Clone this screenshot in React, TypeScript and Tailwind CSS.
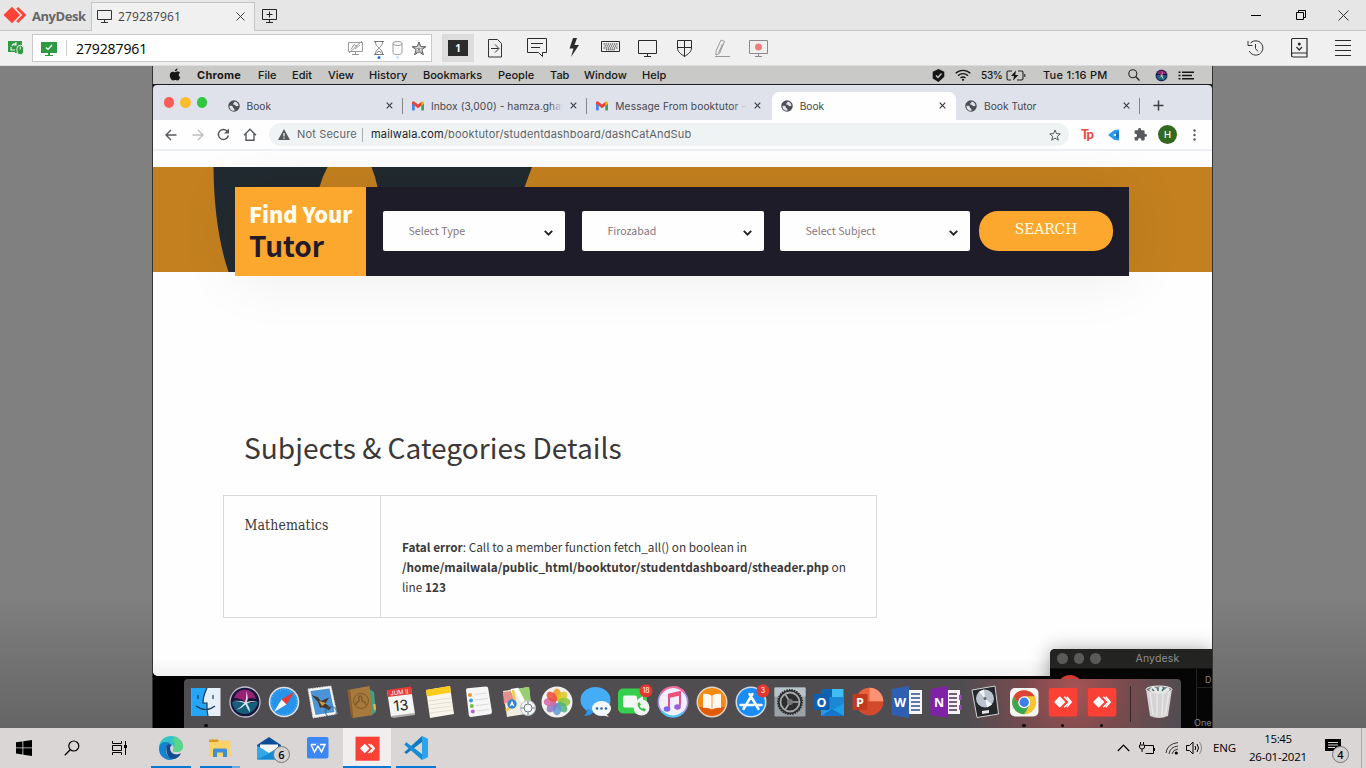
import type { ReactNode } from "react";

const MAC = "font-['Inter',sans-serif]";
const SOURCE = "font-['Noto_Sans_CJK_JP',sans-serif]";
const SEGOE = "font-['Open_Sans',sans-serif]";

type IconProps = { w: number; h: number; box?: string; className?: string; children: ReactNode };

function Icon({ w, h, box, className = "", children }: IconProps) {
  return (
    <svg width={w} height={h} viewBox={box ?? `0 0 ${w} ${h}`} fill="none" className={`block shrink-0 ${className}`}>
      {children}
    </svg>
  );
}

function Cell({ className, children }: { className: string; children?: ReactNode }) {
  return <div className={`flex shrink-0 items-center ${className}`}>{children}</div>;
}

/* ---------- AnyDesk window chrome ---------- */

function TitleBar() {
  return (
    <header className="flex h-[31px] items-stretch border-b border-[#c4c4c4] bg-[#e6e6e6]">
      <Cell className="w-[91px] pl-[3px]">
        <Icon w={26} h={18} className="-mt-px">
          <path d="M0.5 9 9 .8 17 9l-8 8.2z" fill="#ff4336" />
          <path d="M13.2 2.8 15.2 1 23.4 9l-8.2 8-2-1.9L19.3 9z" fill="#ff4336" />
        </Icon>
        <span className={`${SEGOE} mt-[2px] ml-[3px] text-[13px] leading-none font-bold tracking-[-0.45px] text-[#666]`}>AnyDesk</span>
      </Cell>
      <Cell className="mt-[2px] -mb-px w-[164px] border-x border-t border-[#c4c4c4] bg-[#f0f0f0] pl-[5px]">
        <Icon w={15} h={14} className="-mt-[2px]">
          <path d="M.5 1.5h14v9H.5zM7.5 10.5v2.5M4 13.500h7" stroke="#333" />
        </Icon>
        <span className={`${SEGOE} -mt-px ml-[6px] w-[118px] text-[12px] leading-none tracking-[0.150px] text-[#444]`}>279287961</span>
        <Icon w={9} h={9} className="-mt-px">
          <path d="m.5.5 8 8m0-8-8 8" stroke="#444" />
        </Icon>
      </Cell>
      <Cell className="w-[990px] pt-px pl-[7px]">
        <Icon w={15} h={14}>
          <path d="M.5.5h14v10H.5zM7.5 10.5v2.5M4 13.500h7M7.5 2.500v6M4.500 5.500h6" stroke="#222" />
        </Icon>
      </Cell>
      <Cell className="w-[45px] pt-[1px] pl-[6px]">
        <Icon w={10} h={1}>
          <path d="M0 .5h10" stroke="#000" />
        </Icon>
      </Cell>
      <Cell className="w-[43px] pl-[6px]">
        <Icon w={10} h={10}>
          <path d="M.5 2.500h7v7h-7zM2.500 2V.5h7v7H8" stroke="#000" />
        </Icon>
      </Cell>
      <Cell className="pl-[5px]">
        <Icon w={11} h={11}>
          <path d="m.5.5 10 10m0-10-10 10" stroke="#333" />
        </Icon>
      </Cell>
    </header>
  );
}

function ToolBar() {
  return (
    <div className="flex h-[35px] items-center border-b border-[#dcdcdc] bg-[#f0f0f0]">
      <Cell className="w-[32px] pl-[8px]">
        <Icon w={17} h={16}>
          <path d="M0 1h14v5h-2v7H7v-1H0z" fill="#2f9a41" />
          <path d="M4 6a3 3 0 0 1 4-2M8 2v3H5.500M4 10h3M3 7v3h3" stroke="#f0f0f0" strokeWidth="1.1" />
          <path d="M9 8.500v3a3.300 3.300 0 0 0 6.600 0v-3a3.300 3.300 0 0 0-6.600 0z" fill="#2f9a41" stroke="#f0f0f0" />
          <path d="M12.300 6.500v3" stroke="#f0f0f0" />
        </Icon>
      </Cell>
      <Cell className="h-[28px] w-[400px] border border-[#c9c9c9] bg-white pl-[8px]">
        <Icon w={16} h={15}>
          <path d="M0 1h16v11H0zM4 14h8v1H4zM7 12h2v2H7z" fill="#2f9a41" />
          <path d="m5 6.500 2 2 4-4.500" stroke="#fff" strokeWidth="1.200" />
        </Icon>
        <div className="ml-[9px] h-[16px] w-px bg-[#ccc]" />
        <span className={`${SEGOE} mt-px ml-[9px] w-[272px] text-[14px] leading-none tracking-[-0.100px] text-black`}>279287961</span>
        <Cell className="w-[26px]">
          <Icon w={16} h={15}>
            <path d="M.5 1.500h14v9H.5zM7.500 10.500V13M4 13.500h7M3 8.500l3-5 3 1.500M1 12 14 0M7 8l5-4" stroke="#999" />
          </Icon>
        </Cell>
        <Cell className="w-[18px]">
          <Icon w={11} h={18} className="mt-[3px]">
            <path d="M0 .5h10M0 13.500h10M1.500 1c0 4 3 4.500 3 6s-3 2-3 6M8.500 1c0 4-3 4.500-3 6s3 2 3 6M2.500 12l2.500-2 2.500 2" stroke="#777" />
            <circle cx="5" cy="16.500" r="1.500" fill="#2478dc" />
          </Icon>
        </Cell>
        <Cell className="w-[19px]">
          <Icon w={11} h={18} className="mt-[3px]">
            <ellipse cx="5.500" cy="2.500" rx="4.500" ry="2" stroke="#999" />
            <path d="M1 2.500v9c0 2.800 9 2.800 9 0v-9" stroke="#999" />
            <circle cx="5.500" cy="16.500" r="1.500" fill="#cfdffa" />
          </Icon>
        </Cell>
        <Icon w={16} h={15}>
          <path d="m8 1 1.800 4.700h5l-4 3 1.600 5L8 10.800l-4.400 2.900 1.600-5-4-3h5z" stroke="#444" strokeWidth=".9" />
          <path d="M8 3v8M3 6.500 8 8l5-1.500M5 12l3-4 3 4" stroke="#666" strokeWidth=".7" />
        </Icon>
      </Cell>
      <Cell className="w-[56px] pl-[10px]">
        <div className="flex h-[28px] w-[32px] items-center justify-center bg-[#dcdcdc]">
          <div className="flex h-[16px] w-[20px] items-center justify-center bg-[#2b2b2b]">
            <span className={`${SEGOE} text-[10px] leading-none font-bold text-white`}>1</span>
          </div>
        </div>
      </Cell>
      <Cell className="w-[39px]">
        <Icon w={15} h={19}>
          <path d="M.5.5h9l4 4v13.500H.5zM3 9.500h7.500M7 5.500l4 4-4 4" stroke="#333" />
        </Icon>
      </Cell>
      <Cell className="w-[42px]">
        <Icon w={20} h={20}>
          <path d="M.5.500h19v14h-4v4l-4-4H.5zM4 5.500h12M4 9.500h9" stroke="#2b2b2b" />
        </Icon>
      </Cell>
      <Cell className="w-[32px]">
        <Icon w={12} h={20}>
          <path d="M4 0h4L5.500 7H10L2 19l2.500-8.500H.500z" fill="#2b2b2b" />
        </Icon>
      </Cell>
      <Cell className="w-[37px]">
        <Icon w={19} h={13} className="-mt-[3px]">
          <path d="M.5 1.500h18v10H.5z" stroke="#2b2b2b" />
          <path d="M2.500 4h14M3.500 6h13M2.500 8h14M5 9.800h9" stroke="#2b2b2b" strokeDasharray="1.300 .8" />
        </Icon>
      </Cell>
      <Cell className="w-[39px]">
        <Icon w={19} h={17}>
          <path d="M.5.500h18v13H.5zM9.500 13.500v3M6 16.500h7" stroke="#2b2b2b" />
        </Icon>
      </Cell>
      <Cell className="w-[38px]">
        <Icon w={16} h={17}>
          <path d="M.5.500h14V8c0 4-3.500 6-7 8.500C4 14 .5 12 .5 8zM7.500.500v16M.5 7.500h14" stroke="#2b2b2b" />
        </Icon>
      </Cell>
      <Cell className="w-[34px]">
        <Icon w={16} h={18}>
          <path d="M6 1 9.500 2.500 4.500 14.500 1 16v-4zM7.500 5l-4 9M0 17.500h15" stroke="#999" />
        </Icon>
      </Cell>
      <Cell className="w-[498px]">
        <Icon w={19} h={17}>
          <path d="M.5.500h18v13H.5zM9.500 13.500v3M6 16.500h7" stroke="#8a8a8a" />
          <circle cx="9.500" cy="7" r="3.500" fill="#ee7f7b" />
        </Icon>
      </Cell>
      <Cell className="w-[44px]">
        <Icon w={18} h={18}>
          <path d="M3.500 4a7.200 7.200 0 1 1-1.300 8M1 2v4.500h4.500M8.500 5v4.500l2.500 3" stroke="#333" />
        </Icon>
      </Cell>
      <Cell className="w-[44px]">
        <Icon w={17} h={20}>
          <path d="M2.500.500h13.500v18.500H2.500q-2 0-2-1.500V2q0-1.500 2-1.500M.5 16.500q0-1.500 2-1.500H16M5.500 9l2.750 3L11 9" stroke="#2b2b2b" strokeWidth="1.200" />
          <circle cx="8.250" cy="6" r="1.500" fill="#2b2b2b" />
        </Icon>
      </Cell>
      <Icon w={16} h={16}>
        <path d="M0 .5h16M0 5.500h16M0 10.500h16M0 15.500h16" stroke="#2b2b2b" />
      </Icon>
    </div>
  );
}

/* ---------- macOS menu bar ---------- */

function Siri({ size }: { size: number }) {
  return (
    <Icon w={size} h={size} box="0 0 32 32">
      <circle cx="16" cy="16" r="15" fill="#16163a" stroke="#c2bfce" strokeWidth="1.300" />
      <path d="M5 12C8 4 14 3 19 4c5 2 7 5 8 9-5-2-9-1-11 3-3-3-7-4-11-4z" fill="#b52784" opacity=".8" />
      <path d="M3 16c6-1 10 0 13 1 4 1 8-1 13-1-1 6-6 12-13 12S4 23 3 16z" fill="#1790a8" opacity=".6" />
      <path d="M3.500 15q7-1 12.500 1 2-5 1-11 3 6 .8 11 5-1.500 10.500-.5-6 0-10.300 2 3 4 3 9-3-4-4.500-8-4 4-9 5.500 5-3.500 8-7-5-2-12-2z" fill="#ecfaff" opacity=".9" />
    </Icon>
  );
}

function MacMenu() {
  return (
    <div className={`${MAC} flex h-[19px] items-center border-b border-[#1d1d22] bg-[#c9c9c7] text-[11px] leading-none font-medium text-[#161616]`}>
      <Cell className="w-[44px] pl-[16px]">
        <Icon w={12} h={13} box="0 0 24 26" className="-mt-px">
          <path d="M17 1c.3 3-2.400 5.800-5.200 5.700C11.500 4 14 1.300 17 1zM22.500 18.500c-1.500 4-3.700 6.500-5.700 6.500-1.500 0-2.300-1-4.300-1s-2.900 1-4.400 1C5 25 1.500 19 1.500 14.500c0-4.700 3-7.200 6-7.200 2 0 3.500 1.200 4.700 1.200S15 7 17.700 7.200c1.500 0 3.300.8 4.400 2.400-3.800 2.200-3.100 7.500.4 8.900z" fill="#161616" />
        </Icon>
      </Cell>
      <Cell className="w-[61px] font-bold tracking-[0.250px]">Chrome</Cell>
      <Cell className="w-[34px]">File</Cell>
      <Cell className="w-[36px]">Edit</Cell>
      <Cell className="w-[41px]">View</Cell>
      <Cell className="w-[54px] tracking-[0.050px]">History</Cell>
      <Cell className="w-[75px]">Bookmarks</Cell>
      <Cell className="w-[52px]">People</Cell>
      <Cell className="w-[34px]">Tab</Cell>
      <Cell className="w-[58px]">Window</Cell>
      <Cell className="w-[290px]">Help</Cell>
      <Cell className="w-[23px]">
        <Icon w={13} h={13}>
          <path d="m6.500 0 5.800 2.800v5L6.500 13 .7 9.500V2.800z" fill="#161616" />
          <path d="m4 6.500 2 2 3.500-4" stroke="#ccc" strokeWidth="1.300" />
        </Icon>
      </Cell>
      <Cell className="w-[26px]">
        <Icon w={16} h={12}>
          <path d="M.7 4.300a10.500 10.500 0 0 1 14.600 0M3 6.800a7 7 0 0 1 10 0M5.500 9a4 4 0 0 1 5 0" stroke="#161616" strokeWidth="1.300" />
          <circle cx="8" cy="10.800" r="1.100" fill="#161616" />
        </Icon>
      </Cell>
      <Cell className="w-[25px] text-[10px] tracking-[-0.300px]">53%</Cell>
      <Cell className="w-[37px]">
        <Icon w={20} h={11}>
          <path d="M6 1H2.500Q1 1 1 2.500v6Q1 10 2.500 10H5M12 1h3.500Q17 1 17 2.500v6q0 1.500-1.500 1.500H11M18.800 4v3" stroke="#222" strokeWidth="1.100" />
          <path d="M10 .5 5 6h3l-1 4.500L12.500 5H9.300z" fill="#161616" />
        </Icon>
      </Cell>
      <Cell className="w-[85px] tracking-[0.250px]">Tue 1:16 PM</Cell>
      <Cell className="w-[27px]">
        <Icon w={12} h={12}>
          <circle cx="4.800" cy="4.800" r="4" stroke="#222" strokeWidth="1.100" />
          <path d="m7.800 7.800 3.700 3.700" stroke="#222" strokeWidth="1.300" />
        </Icon>
      </Cell>
      <Cell className="w-[23px]">
        <Siri size={13} />
      </Cell>
      <Icon w={16} h={9}>
        <path d="M4 1.200h12M4 4.500h10M4 7.800h12M.5 1.200h2M.5 4.500h2M.5 7.800h2" stroke="#161616" strokeWidth="1.500" />
      </Icon>
    </div>
  );
}

/* ---------- Chrome window ---------- */

function Globe() {
  return (
    <Icon w={12} h={12} box="0 0 24 24">
      <circle cx="12" cy="12" r="11.500" fill="#4c4d55" />
      <path d="M3 12c4-1 7 0 7 3 0 2 3 1 3 4v2.500C7 22 2.500 18 3 12zM13 3c0 3-3 3-3 5s4 1 5 3 4 1 6 1c0-4-3-8.500-8-9z" fill="#dfe1eb" />
    </Icon>
  );
}

function Gmail() {
  return (
    <Icon w={12} h={10} box="0 0 24 19">
      <path d="M0 4v13q0 1.500 1.500 1.500H5.500V8z" fill="#4285f4" />
      <path d="M24 4v13q0 1.500-1.500 1.500H18.500V8z" fill="#34a853" />
      <path d="M18.500 2v7L24 5V3c0-3-3-4-5.500-1z" fill="#fbbc04" />
      <path d="M0 3c0-3 3-4 5-2l7 5.500L19 1v7.500L12 14 5.500 9 0 5z" fill="#ea4335" />
    </Icon>
  );
}

function Close() {
  return (
    <Icon w={7} h={7}>
      <path d="m.7.7 5.600 5.600m0-5.600L.7 6.300" stroke="#3c4045" strokeWidth="1.200" />
    </Icon>
  );
}

function Tab({ icon, label, active, sep, spacing = "" }: { icon: ReactNode; label: string; active?: boolean; sep?: boolean; spacing?: string }) {
  return (
    <div className={`flex h-[28px] w-[184.400px] shrink-0 items-center pb-px pl-[9px] ${active ? "rounded-t-[7px] bg-[#fefefe]" : ""}`}>
      {icon}
      <span className={`relative ml-[7px] w-[132px] overflow-hidden text-[10.200px] leading-[14px] whitespace-nowrap text-[#45474d] ${spacing}`}>
        {label}
        {!active && <i className="absolute inset-y-0 right-0 w-[14px] bg-linear-to-r from-transparent to-[#dfe1eb]" />}
      </span>
      <span className="ml-[7px]">
        <Close />
      </span>
      {sep && <i className="ml-[9px] h-[16px] w-px bg-[#85888f]" />}
    </div>
  );
}

function TabStrip() {
  return (
    <div className={`${MAC} flex h-[35px] items-end bg-[#dfe1eb]`}>
      <div className="flex h-full w-[65.500px] shrink-0 gap-[6px] pt-[12px] pl-[10.500px]">
        <i className="size-[10.500px] rounded-full bg-[#fc5b57]" />
        <i className="size-[10.500px] rounded-full bg-[#fdbc2e]" />
        <i className="size-[10.500px] rounded-full bg-[#2fc840]" />
      </div>
      <Tab icon={<Globe />} label="Book" spacing="tracking-[0.050px]" sep />
      <Tab icon={<Gmail />} label="Inbox (3,000) - hamza.ghayas" spacing="tracking-[0.080px]" sep />
      <Tab icon={<Gmail />} label="Message From booktutor - ha" spacing="tracking-[0.120px]" />
      <Tab icon={<Globe />} label="Book" active />
      <Tab icon={<Globe />} label="Book Tutor" sep />
      <div className="flex h-[28px] items-center pb-px pl-[13px]">
        <Icon w={11} h={11}>
          <path d="M5.500.500v10M.5 5.500h10" stroke="#3c4045" strokeWidth="1.500" />
        </Icon>
      </div>
    </div>
  );
}

function AddressBar() {
  return (
    <div className={`${MAC} flex h-[31px] items-center border-b-2 border-[#eceff3] bg-[#fefefe] text-[11px] leading-none text-[#5f6368]`}>
      <Cell className="w-[26px] pl-[12px]">
        <Icon w={12} h={12}>
          <path d="M11.500 6H1.200M6 1 1 6l5 5" stroke="#55585d" strokeWidth="1.400" />
        </Icon>
      </Cell>
      <Cell className="w-[38px] pl-[13px]">
        <Icon w={12} h={12}>
          <path d="M.5 6h10.300M6 1l5 5-5 5" stroke="#bcbdc0" strokeWidth="1.400" />
        </Icon>
      </Cell>
      <Cell className="w-[26px]">
        <Icon w={13} h={13}>
          <path d="M11.300 7.500A5 5 0 1 1 10 3" stroke="#55585d" strokeWidth="1.500" />
          <path d="M12 .5v5H7z" fill="#55585d" />
        </Icon>
      </Cell>
      <Cell className="w-[26px]">
        <Icon w={14} h={13}>
          <path d="M3 6v6.200h8V6M1 7.200l6-6 6 6" stroke="#55585d" strokeWidth="1.400" />
        </Icon>
      </Cell>
      <div className="flex h-[23px] w-[800px] shrink-0 items-center rounded-full bg-[#eff3f4] pl-[9px]">
        <Icon w={12} h={11}>
          <path d="M6 0 12 11H0z" fill="#55585d" />
          <path d="M6 4v3.500M6 8.500v1.300" stroke="#fff" strokeWidth="1.200" />
        </Icon>
        <span className="ml-[7px] w-[65px] tracking-[0.170px] whitespace-nowrap">Not Secure</span>
        <i className="h-[14px] w-px bg-[#a9acb0]" />
        <span className="ml-[8px] w-[678px] tracking-[0.170px]">
          <span className="text-[#202124]">mailwala.com</span>/booktutor/studentdashboard/dashCatAndSub
        </span>
        <Icon w={12} h={12} box="0 0 24 24">
          <path d="m12 2 3 7.200 7.500.6-5.800 5 1.900 7.600L12 18.200 5.400 22.400l1.900-7.600-5.800-5 7.500-.6z" stroke="#55585d" strokeWidth="2" />
        </Icon>
      </div>
      <Cell className="w-[39px] pl-[12px]">
        <span className="font-['Lato',sans-serif] text-[13px] leading-none font-black tracking-[-1px] text-[#f04b43]">Tp</span>
      </Cell>
      <Cell className="w-[26px]">
        <Icon w={12} h={12}>
          <path d="M0 6 6.500 1 11 .5V4L5.500 6 11 8v3.500L6.500 11z" fill="#2a9be8" />
          <path d="M7 4l4-1.500v7L7 8z" fill="#1676c9" />
          <path d="M5 6l3-1.500v3z" fill="#dff2ff" />
        </Icon>
      </Cell>
      <Cell className="w-[24px]">
        <Icon w={13} h={13} box="1 1 22 22">
          <path d="M20.500 11H19V7a2 2 0 0 0-2-2h-4V3.500a2.500 2.500 0 0 0-5 0V5H4a2 2 0 0 0-2 2v3.800h1.500a2.700 2.700 0 0 1 0 5.400H2V20a2 2 0 0 0 2 2h3.800v-1.500a2.700 2.700 0 0 1 5.400 0V22H17a2 2 0 0 0 2-2v-4h1.500a2.500 2.500 0 0 0 0-5z" fill="#55585d" />
        </Icon>
      </Cell>
      <div className="flex size-[19px] shrink-0 items-center justify-center rounded-full bg-[#33691e] text-[9.500px] font-medium text-white">H</div>
      <Icon w={3} h={12} className="ml-[16px]">
        <circle cx="1.500" cy="1.500" r="1.200" fill="#55585d" />
        <circle cx="1.500" cy="6" r="1.200" fill="#55585d" />
        <circle cx="1.500" cy="10.500" r="1.200" fill="#55585d" />
      </Icon>
    </div>
  );
}

function Select({ label, className }: { label: string; className: string }) {
  return (
    <div className={`${SOURCE} flex h-[40px] shrink-0 items-center justify-between rounded-[2px] bg-[#fefefe] pr-[12px] pl-[25.500px] text-[10.600px] leading-none text-[#85747c] ${className}`}>
      <span>{label}</span>
      <Icon w={9} h={6} className="mt-[3px]">
        <path d="m.8.800 3.700 3.800L8.200.800" stroke="#222" strokeWidth="1.900" />
      </Icon>
    </div>
  );
}

function Hero() {
  return (
    <section className="relative mt-[16px] h-[105px] bg-[#c4801f]">
      <Icon w={400} h={105} className="absolute top-0 left-0">
        <path d="M60.500 0Q61 62 75.500 105H340L379 0z" fill="#212a30" />
        <path d="M174.500 0q-5 9-8 20h58q-2-10-6-20z" fill="#c4801f" />
      </Icon>
      <div className="absolute top-[20px] left-[82px] flex h-[89px] w-[894px] bg-[#1f1c2a] shadow-[0_0_62px_rgba(0,0,0,0.08)]">
        <div className={`${SOURCE} flex w-[131px] shrink-0 flex-col bg-[#fca72e] pt-[12px] pl-[14px]`}>
          <span className="text-[21.800px] leading-[29px] font-black tracking-[-0.080px] whitespace-nowrap text-[#fefef0]">Find Your</span>
          <span className="text-[28px] leading-[34px] font-bold text-[#251a2a]">Tutor</span>
        </div>
        <div className="flex items-center pb-px pl-[17px]">
          <Select label="Select Type" className="mr-[17px] w-[182px]" />
          <Select label="Firozabad" className="mr-[16px] w-[182px]" />
          <Select label="Select Subject" className="mr-[9px] w-[190px]" />
          <div className="flex h-[40px] w-[134px] items-center justify-center rounded-[19px] bg-[#fca72e] pb-[2px] font-['DejaVu_Serif_Condensed','DejaVu_Serif',serif] text-[15.500px] leading-none tracking-[-0.100px] text-[#fffce0]">
            SEARCH
          </div>
        </div>
      </div>
    </section>
  );
}

function Page() {
  return (
    <main className="flex h-[525px] flex-col overflow-hidden rounded-b-[5px] bg-[#fefefe]">
      <Hero />
      <h1 className={`${SOURCE} mt-[155px] ml-[91px] h-[42px] text-[28.100px] leading-[40px] whitespace-nowrap text-[#3a3838]`}>Subjects &amp; Categories Details</h1>
      <div className="mt-[26px] ml-[70px] flex h-[123px] w-[654px] shrink-0 border border-[#d9d9d9] text-[#3a3838]">
        <div className="w-[157px] shrink-0 border-r border-[#d9d9d9] pt-[21px] pl-[20.500px] font-['DejaVu_Serif_Condensed','DejaVu_Serif',serif] text-[14px] leading-[16px] tracking-[0.080px]">
          Mathematics
        </div>
        <div className={`${SOURCE} pt-[41px] pl-[21px] text-[11.800px] leading-[19.800px] whitespace-nowrap`}>
          <b>Fatal error</b>: Call to a member function fetch_all() on boolean in
          <br />
          <b>/home/mailwala/public_html/booktutor/studentdashboard/stheader.php</b> on
          <br />
          line <b>123</b>
        </div>
      </div>
      <div className="mt-auto h-[16px] bg-linear-to-b from-[#fcfcfc] to-[#f1f1f1]" />
    </main>
  );
}

/* ---------- Dock ---------- */

function AnyDeskTile({ size = 32, radius = 2 }: { size?: number; radius?: number }) {
  return (
    <Icon w={size} h={size} box="0 0 32 32">
      <rect x="1.800" y="2" width="28.500" height="28.500" rx={radius} fill="#fb4036" />
      <path d="m7 16 5.700-5.700 5.700 5.700-5.700 5.700z" fill="#fff" />
      <path d="m17.200 10.700 5.300 5.300-5.300 5.300M19.800 10.700 24.300 16l-4.500 5.300" stroke="#fff" strokeWidth="1.400" />
    </Icon>
  );
}

function Badge({ x, children }: { x: number; children: string }) {
  return (
    <g>
      <circle cx={x} cy="4.800" r="6.500" fill="#e2382f" />
      <text x={x} y="7.300" fontSize="7" fill="#fff" textAnchor="middle" fontFamily="Inter, sans-serif">
        {children}
      </text>
    </g>
  );
}

function Glyph({ x, y, size, children }: { x: number; y: number; size: number; children: string }) {
  return (
    <text x={x} y={y} fontSize={size} fontWeight="bold" fill="#fff" textAnchor="middle" fontFamily="Open Sans, sans-serif">
      {children}
    </text>
  );
}

const PETALS = ["#f79a1c", "#d9cb20", "#8dc63f", "#4fb37a", "#5f9bd6", "#8a79c7", "#d667a8", "#ee4d3b"];

const DOCK: ReactNode[] = [
  <>
    <path d="M1.500 2h29v28h-29z" fill="#e6eff8" />
    <path d="M1.500 2H17c-2 6-4 10-4 15h4c-.5 5 0 9 1 13H1.500z" fill="#25a5f5" />
    <path d="M8 9v4M23 9v4M6 20q10 7 19 0M17 2q-4 8-4 15h4q-.5 7 1 13" stroke="#173b5c" strokeWidth="1.200" />
  </>,
  null,
  <>
    <circle cx="16" cy="16" r="15.300" fill="#dce1e7" />
    <circle cx="16" cy="16" r="13.700" fill="#2493e8" />
    <circle cx="16" cy="16" r="12.500" stroke="#a7d6fa" strokeDasharray=".6 2" />
    <path d="m26 6-7.500 12.500-5-5z" fill="#f2352f" />
    <path d="m6 26 7.500-12.500 5 5z" fill="#f4f7fa" />
  </>,
  <>
    <path d="m1 3 23-3 6 28L6 32z" fill="#f5f5f2" stroke="#ddd" strokeDasharray="1.500 1" />
    <path d="m3.500 5 19-2.500 5 23.500-19 3z" fill="#4c94d6" />
    <path d="m4.500 9 6 2 3.500 4 8-3.500-3.500 6L24 22l-2 2-7-3-2 1-2-6z" fill="#4a3625" />
    <path d="m12 15 7 2-4 3z" fill="#c99d4c" />
    <circle cx="24" cy="26" r="5.500" stroke="#325e82" strokeWidth="1.500" opacity=".6" />
  </>,
  <>
    <path d="m23 3 5 3 2 20-6 4z" fill="#3f9e86" />
    <path d="M27 18l2.500 0 .5 6-2 .5z" fill="#e8b432" />
    <path d="m1.500 4 22-4 3 29-19 3q-2 0-2-2z" fill="#a7793c" />
    <path d="m1.500 4 2.500-.5 3.500 28q-2 0-2.500-2z" fill="#8a602c" />
    <circle cx="15" cy="15" r="7.500" stroke="#7f5a2a" />
    <path d="M10 19q0-3 3-4-1-5 1-5t2 5q3 0 4 4" stroke="#7f5a2a" strokeWidth="1.500" />
  </>,
  <>
    <path d="m2 5 24-3 4 26-24 3z" fill="#f5f5f3" />
    <path d="m2 4 24-3.500 1.200 7.500-24.500 3z" fill="#e63b36" />
    <path d="m6 30 24-3 0 2-22 3z" fill="#a9a9a9" />
    <text x="14.500" y="8.500" fontSize="6" fill="#fff" textAnchor="middle" transform="rotate(-6 14 8)" fontFamily="Inter, sans-serif">JUM II</text>
    <text x="16" y="24.500" fontSize="14.500" fill="#222" textAnchor="middle" transform="rotate(-6 16 20)" fontFamily="Inter, sans-serif">13</text>
  </>,
  <>
    <path d="m2 4 24-4 4 28-24 4z" fill="#f8f6ec" />
    <path d="m2 4 24-4 1 6.500-24 4z" fill="#fbcc1c" />
    <path d="m4 15 23-3M4.500 19l23-3M5 23l23-3M5.500 27l23-3" stroke="#ddd8c6" strokeWidth=".8" />
  </>,
  <>
    <path d="M3 4q0-1.500 1.500-1.700L23 .5q2 0 2.200 2L29 26q0 2-2 2.300L8 31q-2 0-2.200-2z" fill="#f6f6f6" />
    <circle cx="7" cy="9" r="2" fill="#f79427" />
    <circle cx="8" cy="14.500" r="2" fill="#2f9de8" />
    <circle cx="8.800" cy="20" r="2" fill="#6cc03f" />
    <circle cx="9.800" cy="25.500" r="2" fill="#b264d6" />
    <path d="m11 8.500 13-1.500M12 14l13-1.500M13 19.500l13-1.500M14 25l12-1.500" stroke="#d2d2d2" strokeWidth=".8" />
  </>,
  <>
    <path d="m1 5 26-4 3 26-25 4z" fill="#f0ece0" />
    <path d="m14 3 13-2 3 24-9-6z" fill="#97cf72" />
    <path d="m1 6 8-1 3 9-10 4z" fill="#e58f8f" />
    <path d="m9 5 6-1 11 21" stroke="#fff" strokeWidth="4" />
    <path d="m11 4 2 12-9 9" stroke="#f2cd47" strokeWidth="2.500" />
    <circle cx="10" cy="18" r="4.700" fill="#3182d5" />
    <path d="m10 14.500 2.500 6L10 19l-2.500 1.500z" fill="#fff" />
    <circle cx="26" cy="22" r="7.500" fill="#f2f4f5" stroke="#b8bfc6" />
    <circle cx="26" cy="22" r="4" stroke="#727d87" />
    <path d="M26 15v3M26 26v3M19 22h3M30 22h3" stroke="#727d87" />
  </>,
  <>
    <circle cx="16" cy="16" r="15.500" fill="#f2f1ee" />
    {PETALS.map((c, i) => (
      <ellipse key={c} cx="16" cy="8.800" rx="4.200" ry="6.200" fill={c} opacity=".85" transform={`rotate(${i * 45} 16 16)`} />
    ))}
  </>,
  <>
    <ellipse cx="15.500" cy="14" rx="15" ry="13" fill="#45adf6" />
    <path d="M7 22q0 6-3 8 6 0 10-4z" fill="#2f95ea" />
    <ellipse cx="21.500" cy="22.500" rx="9.500" ry="7.500" fill="#f4f7fa" />
    <path d="m26 28 3 3-7-2z" fill="#f4f7fa" />
    <circle cx="17" cy="22.500" r="1.300" fill="#276ba9" />
    <circle cx="21.500" cy="22.500" r="1.300" fill="#276ba9" />
    <circle cx="26" cy="22.500" r="1.300" fill="#276ba9" />
  </>,
  <>
    <rect y="2.500" width="29" height="25" rx="5" fill="#35d04e" />
    <rect x="5" y="9.500" width="14" height="12" rx="2" fill="#f4f8f4" />
    <path d="m19 14 6-4v10z" fill="#f4f8f4" />
    <circle cx="23.500" cy="21.500" r="8" fill="#f0f3f0" />
    <path d="M19.500 17.500q0 6 7 8l1.500-2-2.500-1.800-1.300 1q-2-1-2.500-3l1.200-1-1.400-2.600z" fill="#36c24c" />
    <Badge x={28}>18</Badge>
  </>,
  <>
    <circle cx="16" cy="16" r="14.700" fill="#f3effa" stroke="#9d8ff0" strokeWidth="1.500" />
    <path d="M4 7.500A14.700 14.700 0 0 1 27.500 6.500" stroke="#f56a9d" strokeWidth="2" />
    <path d="M5 25.500A14.700 14.700 0 0 0 26 26.500" stroke="#49c7f0" strokeWidth="2" />
    <path d="M12 22V8.500L23 6v13.500" stroke="#e6508c" strokeWidth="2" />
    <path d="M12 8.500 23 6v3.500L12 12z" fill="#f05273" />
    <ellipse cx="10" cy="23" rx="3.300" ry="2.700" fill="#7a67e8" />
    <ellipse cx="20.500" cy="21" rx="3.300" ry="2.700" fill="#9a60d8" />
  </>,
  <>
    <circle cx="16" cy="16" r="15.500" fill="#ddd3ca" />
    <circle cx="16" cy="16" r="14" fill="#f58a12" />
    <path d="M3 21a14 14 0 0 0 26 0z" fill="#e35a0a" />
    <path d="M16 10q-4-3-9-2v14q5-1 9 1.500Q20 21 25 22V8q-5-1-9 2z" fill="#fff8ee" />
    <path d="M16 10v13" stroke="#ee8420" strokeWidth=".8" />
  </>,
  <>
    <circle cx="16" cy="16" r="15.500" fill="#cfdbe8" />
    <circle cx="16" cy="16" r="14" fill="#1a8cf5" />
    <path d="m17.500 8-9 15M14.500 8l9 15M5.500 19h13M22.500 19h4" stroke="#fff" strokeWidth="2.500" strokeLinecap="round" />
    <Badge x={28}>3</Badge>
  </>,
  <>
    <rect x=".5" y="1.500" width="31" height="29" rx="1" fill="#9aa3a7" />
    <path d="M.5 1.500h31v9H.5z" fill="#b9c4ca" />
    <circle cx="16" cy="16" r="12" fill="#2d2e30" stroke="#2d2e30" strokeWidth="2" strokeDasharray="1.500 1" />
    <circle cx="16" cy="16" r="9.500" stroke="#a6a8aa" strokeWidth="1.800" />
    <path d="M16 16h9M16 16l-5-8M16 16l-5 8" stroke="#a6a8aa" strokeWidth="1.600" />
    <circle cx="16" cy="16" r="3" fill="#77797b" />
  </>,
  <>
    <path d="M8 3h23v26H8z" fill="#1a87d7" />
    <path d="M8 3h11v8H8z" fill="#1263b2" />
    <path d="M19 3h11v8H19z" fill="#40bdf2" />
    <path d="m8 18 11.500 6L31 17v13H8z" fill="#1f9fe8" />
    <path d="m8 30 11-7 12 7z" fill="#1675c8" />
    <rect x=".5" y="8" width="16" height="16" rx="1" fill="#0f5fb0" />
    <Glyph x={8.500} y={20.500} size={12.500}>O</Glyph>
  </>,
  <>
    <circle cx="17.500" cy="15.500" r="13.700" fill="#e9633c" />
    <path d="M17.500 1.800v13.700h13.700A13.700 13.700 0 0 0 17.500 1.800z" fill="#fb9272" />
    <path d="M17.500 29.200a13.700 13.700 0 0 0 13.700-13.700H4a13.700 13.700 0 0 0 13.500 13.700z" fill="#d2492c" />
    <rect x=".5" y="8" width="15" height="16" rx="1" fill="#c03a20" />
    <Glyph x={8} y={20.500} size={12.500}>P</Glyph>
  </>,
  <>
    <path d="M17 4h14v24H17z" fill="#f4f5f8" />
    <path d="M20 8h9M20 12h9M20 16h9M20 20h9M20 24h9" stroke="#2a4d86" strokeWidth="1.500" />
    <path d="M.5 3 18 0v32L.5 29z" fill="#2f5fb0" />
    <Glyph x={9} y={20.500} size={12.500}>W</Glyph>
  </>,
  <>
    <path d="M17 4h13v24H17z" fill="#f4f2f6" />
    <path d="M19 8h8M19 12h8M19 16h8M19 20h8M19 24h8" stroke="#45334f" strokeWidth="1.500" />
    <path d="M29 9h2.500v5H29zM29 19h2.500v5H29z" fill="#9c4db5" />
    <path d="M.5 3 18 0v32L.5 29z" fill="#8022a8" />
    <Glyph x={9} y={20.500} size={12.500}>N</Glyph>
  </>,
  <>
    <path d="m3 4 23-4 3.500 28L8 31.500z" fill="#26272a" stroke="#d1d1d1" />
    <circle cx="16" cy="12.500" r="9" fill="#bcc5cf" />
    <path d="m16 12.500-6-7 5-2zM16 12.500l7 6-5 3z" fill="#f2f6fa" />
    <circle cx="16" cy="12.500" r="1.500" fill="#666" />
    <path d="m13 25 7-1v3l-7 1z" fill="#e6e6e6" />
  </>,
  <>
    <rect x="2" y="2" width="28.500" height="28.500" rx="5" fill="#f5f5f3" />
    <circle cx="16.200" cy="16.200" r="12" fill="#f6c52f" />
    <path d="M5.800 10.200A12 12 0 0 1 26.600 10.200H16.200L11 19.200z" fill="#dc4437" />
    <path d="M5.800 10.200A12 12 0 0 0 16.200 28.200L21.500 19.200H11z" fill="#3aa757" />
    <circle cx="16.200" cy="16.200" r="6" fill="#fff" />
    <circle cx="16.200" cy="16.200" r="4.700" fill="#3d7fe8" />
  </>,
];

function Dot() {
  return <i className="absolute bottom-[-9px] left-[14px] size-[3.500px] rounded-full bg-black" />;
}

function Dock() {
  return (
    <div className="relative z-10 mt-[3px] ml-[31px] flex h-[49px] w-[997px] items-start gap-[6.960px] rounded-t-[4px] bg-[#504d51] bg-[radial-gradient(circle_at_890px_10px,#a85354_0px,#7a4b4e_50px,#504d51_110px)] pt-[7px] pl-[6px]">
      {DOCK.map((art, i) => (
        <div key={i} className="relative shrink-0">
          {art ? <Icon w={32} h={32} className="overflow-visible">{art}</Icon> : <Siri size={32} />}
          {(i === 0 || i === 21) && <Dot />}
        </div>
      ))}
      <div className="relative shrink-0">
        <AnyDeskTile />
        <Dot />
      </div>
      <div className="relative shrink-0">
        <AnyDeskTile />
        <Dot />
      </div>
      <i className="ml-[5px] h-[36px] w-px shrink-0 bg-[#29282b]" />
      <Icon w={28} h={34} className="ml-[7px] -mt-px">
        <path d="M1 4h26l-4 27q-9 4-18 0z" fill="#d5d3d3" />
        <path d="m5 7 3 23M12 8v24M18 8l-1 24M24 7l-4 23" stroke="#efefef" strokeWidth="1.500" opacity=".7" />
        <ellipse cx="14" cy="4.500" rx="13" ry="3.500" fill="#7d8487" stroke="#ecebeb" />
        <path d="m4 5 4-4 4 3 4-3 3 4 4-3 2 3-5 3H8z" fill="#e8e8e6" />
        <path d="m7 4 2 2M19 3l-2 3M13 3v3" stroke="#3c6f74" strokeWidth="1.500" />
      </Icon>
    </div>
  );
}

function MacAnydesk() {
  return (
    <div className={`${MAC} absolute right-0 bottom-0 h-[79px] w-[162px] overflow-hidden rounded-tl-[5px] bg-[#050505] shadow-[0_2px_20px_rgba(0,0,0,0.4)]`}>
      <div className="flex h-[20px] items-center border-b border-[#111] bg-[#232321] pl-[7px]">
        <i className="mr-[6px] size-[10.500px] rounded-full bg-[#5a5a59]" />
        <i className="mr-[6px] size-[10.500px] rounded-full bg-[#5a5a59]" />
        <i className="size-[10.500px] rounded-full bg-[#5a5a59]" />
        <span className="mt-px ml-[35px] text-[10.500px] leading-none tracking-[0.150px] text-[#8f8f8f]">Anydesk</span>
      </div>
      <div className="flex">
        <div className="h-[59px] w-[146px] pt-[6px] pl-[7px]">
          <i className="block size-[26px] rounded-full bg-[#d33a32]" />
        </div>
        <div className="flex h-[59px] w-[16px] flex-col border-l border-[#222] pt-[6px] text-[9px] leading-[10px] text-[#888]">
          <span className="h-[18px] border-b border-[#222] pl-[8px]">D</span>
          <span className="mt-[30px] -ml-[3px]">One</span>
        </div>
      </div>
    </div>
  );
}

function RemoteDesktop() {
  return (
    <div className="flex h-[662px] justify-center bg-[#808080] bg-linear-to-b from-[#808080] from-80% to-[#656565] pr-px">
      <div className="relative flex w-[1061px] flex-col overflow-hidden border-x border-[#333] bg-black">
        <MacMenu />
        <div className="flex flex-col overflow-hidden rounded-t-[4px]">
          <TabStrip />
          <AddressBar />
        </div>
        <Page />
        <MacAnydesk />
        <Dock />
      </div>
    </div>
  );
}

/* ---------- Windows taskbar ---------- */

function TaskApp({ children, active, open }: { children: ReactNode; active?: boolean; open?: boolean }) {
  return (
    <div className={`relative mr-px flex h-[40px] w-[48px] shrink-0 items-center justify-center ${active ? "bg-[#f1eeef]" : ""}`}>
      {children}
      {(open || active) && <i className={`absolute bottom-0 h-[2px] bg-[#0b78d4] ${active ? "inset-x-0" : "inset-x-[4px]"}`} />}
    </div>
  );
}

function CountBadge({ children, className }: { children: string; className: string }) {
  return (
    <span className={`${SEGOE} absolute flex size-[17px] items-center justify-center rounded-full border border-[#777] bg-[#d3d1d1] text-[11px] leading-none font-semibold text-black ${className}`}>
      {children}
    </span>
  );
}

function Taskbar() {
  return (
    <footer className={`${SEGOE} flex h-[40px] items-center bg-[#d9d6d5] text-[12px] leading-none text-black`}>
      <Cell className="w-[48px] justify-center">
        <Icon w={16} h={16}>
          <path d="m0 2.300 6.500-.9v6.100H0zM7.300 1.300 16 0v7.500H7.300zM0 8.300h6.500v6.100L0 13.500zM7.300 8.300H16V16l-8.700-1.300z" fill="#000" />
        </Icon>
      </Cell>
      <Cell className="w-[48px] justify-center">
        <Icon w={16} h={16}>
          <circle cx="9.800" cy="6" r="5" stroke="#000" strokeWidth="1.200" />
          <path d="M6.200 9.700.8 15.200" stroke="#000" strokeWidth="1.300" />
        </Icon>
      </Cell>
      <Cell className="w-[51px] pl-[15px]">
        <Icon w={18} h={16}>
          <path d="M1.500 1v2.500h9V1M1.500 15v-2.500h9V15M1.500 5.500h9v5h-9zM14.500 1v14" stroke="#000" />
          <path d="M13 5h3v3h-3z" fill="#000" />
        </Icon>
      </Cell>
      <TaskApp open>
        <Icon w={24} h={24}>
          <path d="M.3 10C1 4 6 0 12 0c7 0 12 5 12 10 0 4-3 6-6.500 6-3 0-4-1-3.500-2 2-3-1-7-5-7-5 0-8 2-8.700 3z" fill="#36c3c5" />
          <path d="M16 1c5 1.500 8 5 8 9 0 4-3 6-6.500 6-3 0-4-1-3.500-2 3-4 2-8-1-10z" fill="#67dc75" opacity=".75" />
          <path d="M.3 10C2 5 10 5 13 9c-3-1-6 1-6 5 0 5 4 8 8 9-7 3-15-2-15-10z" fill="#1683cf" />
          <path d="M7.300 13C7 8 11 7.500 13 9c-2 1-2 3-1.800 4 .5 5 6 7 11 4-2 4-5 6-8 6-4 0-7-5-6.900-10z" fill="#144b8c" />
        </Icon>
      </TaskApp>
      <TaskApp open>
        <Icon w={22} h={20}>
          <path d="M0 1.500h9l2 2.500H0z" fill="#d89b1d" />
          <path d="M0 4h8.500L10 2.500h11.500v16H0z" fill="#fbd268" />
          <path d="M4 19v-7q0-1.500 1.500-1.500h11Q18 10.500 18 12v7h-4v-4.500H8V19z" fill="#3c8fd6" />
        </Icon>
        <i className="absolute right-[4px] bottom-0 z-10 h-[2px] w-[8px] bg-[#69a9df]" />
      </TaskApp>
      <TaskApp>
        <Icon w={24} h={23}>
          <path d="M0 8 12 0l12 8v14H0z" fill="#0b4f98" />
          <path d="M3 7.500h18v9H3z" fill="#f6f6f6" />
          <path d="M0 8.500 12 16l12-7.500V22.500H0z" fill="#32a8e8" />
          <path d="m0 22.500 24-12v12z" fill="#1689d5" />
        </Icon>
        <CountBadge className="top-[18px] left-[28px]">6</CountBadge>
      </TaskApp>
      <TaskApp>
        <Icon w={22} h={22}>
          <rect width="21.500" height="21.500" rx="2" fill="#3b87f6" />
          <path d="M4 7.500h14l-3.500 7.500-3.500-6-3.500 6L4 7.500" stroke="#fff" strokeWidth="1.500" />
          <path d="M9 7.500h4" stroke="#3b87f6" strokeWidth="2" />
        </Icon>
      </TaskApp>
      <TaskApp active>
        <AnyDeskTile size={27} radius={0} />
      </TaskApp>
      <TaskApp open>
        <Icon w={24} h={24}>
          <path d="M18 0 2 14.800l-1.800 1.400 2.100 1.800L18 6z" fill="#1079c0" />
          <path d="M18 24 .2 8.500 2.300 6.300 18 18z" fill="#168bd6" />
          <path d="M18 0v24l6-2.700V2.700z" fill="#2ba4ee" />
        </Icon>
      </TaskApp>
      <Cell className="ml-[676px] w-[22px]">
        <Icon w={13} h={8}>
          <path d="m.8 7 5.700-5.800L12.200 7" stroke="#000" strokeWidth="1.200" />
        </Icon>
      </Cell>
      <Cell className="w-[26px]">
        <Icon w={17} h={13}>
          <path d="M5.500 3.500h9v8h-8M15.500 6v3M1.500 0v2.500M4.500 0v2.500M.5 3h5v2q0 2-2.500 2T.5 5zM3 7v3" stroke="#000" />
        </Icon>
      </Cell>
      <Cell className="w-[21px]">
        <Icon w={14} h={14}>
          <path d="M1 12Q2 3 13 1.500M4 13Q5 6 13 5M7 13q1-4.500 6-5" stroke="#333" />
          <circle cx="11.300" cy="12" r="1.600" fill="#000" />
        </Icon>
      </Cell>
      <Cell className="w-[27px]">
        <Icon w={17} h={14}>
          <path d="M.5 4.500h3l3.500-3.500v12L3.500 9.500h-3zM9 5q1.500 2 0 4M11 3q3 4 0 8" stroke="#000" />
          <path d="M13.500 1q4 6 0 12" stroke="#888" />
        </Icon>
      </Cell>
      <Cell className="w-[32px] text-[11.500px] tracking-[-0.200px]">ENG</Cell>
      <div className="flex w-[66px] shrink-0 flex-col items-center gap-[6px] pb-px text-[11.500px] tracking-[-0.200px] whitespace-nowrap">
        <span className="tracking-[-0.400px]">15:45</span>
        <span>26-01-2021</span>
      </div>
      <Cell className="relative ml-[14px] h-[40px] w-[36px]">
        <Icon w={16} h={15} className="-mt-[3px]">
          <path d="M0 0h16v12h-4v3l-3-3H0z" fill="#000" />
          <path d="M3 3.500h10M3 6h10M3 8.500h7" stroke="#d9d6d5" />
        </Icon>
        <CountBadge className="top-[18px] left-[7px]">4</CountBadge>
      </Cell>
      <i className="h-full w-px bg-[#aaa]" />
    </footer>
  );
}

export default function App() {
  return (
    <div className="flex h-[768px] w-[1366px] flex-col overflow-hidden">
      <TitleBar />
      <ToolBar />
      <RemoteDesktop />
      <Taskbar />
    </div>
  );
}
